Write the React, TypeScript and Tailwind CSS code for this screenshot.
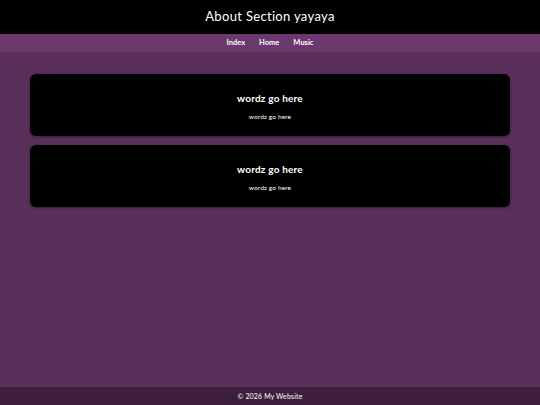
export default function App() {
  const cards = [1, 2];
  return (
    <div className="min-h-screen flex flex-col bg-[#5a2f5a] text-white" style={{ fontFamily: "Lato, 'Noto Sans', sans-serif" }}>
      <header className="bg-black h-[34px] flex items-center justify-center">
        <h1 className="text-[13px] tracking-wide">About Section yayaya</h1>
      </header>
      <nav className="bg-[#6c386d] h-[18px] flex items-center justify-center gap-[14px] text-[7.5px] font-bold">
        <a>Index</a>
        <a>Home</a>
        <a>Music</a>
      </nav>
      <main className="flex-1 px-[30px] pt-[22px] flex flex-col gap-[9px]">
        {cards.map((c) => (
          <section key={c} className="bg-black rounded-[6px] h-[62px] flex flex-col items-center shadow-[0_1px_3px_rgba(0,0,0,0.4)]">
            <h2 className="text-[10px] font-bold mt-[19px] leading-none tracking-[0.02em]">wordz go here</h2>
            <p className="text-[6.5px] mt-[11px] leading-none tracking-[0.02em]">wordz go here</p>
          </section>
        ))}
      </main>
      <footer className="bg-[#3d1f3d] h-[18px] flex items-center justify-center text-[7px] tracking-[0.02em]">
        © 2026 My Website
      </footer>
    </div>
  );
}
